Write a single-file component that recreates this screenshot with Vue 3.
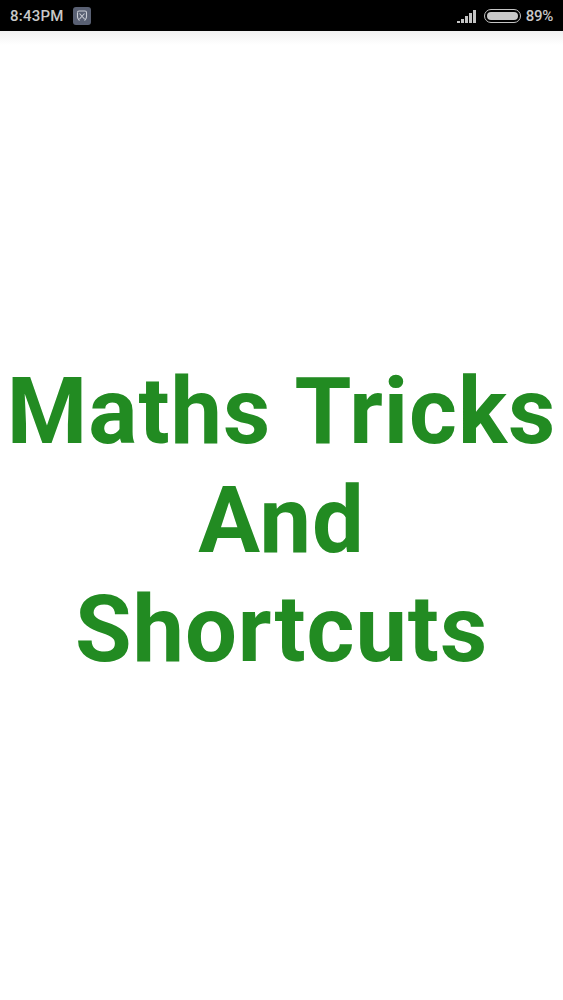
<template>
  <div class="screen">
    <header class="status">
      <div class="left">
        <span class="time">8:43PM</span>
        <span class="notif">
          <svg width="12" height="12" viewBox="0 0 12 12" fill="none" stroke="#c9ccd4" stroke-width="1.1">
            <path d="M1.5 2.5C1.5 1.5 2 1 3 1h6c1 0 1.500.5 1.500 1.500V7c0 1.500-1 2.500-2 3.500" />
            <path d="M1.500 2.500V7c0 1.500 1 2.500 2 3.500" />
            <path d="M3.500 3.500l5 5.500M8.500 3.500l-5 5.500" />
          </svg>
        </span>
      </div>
      <div class="right">
        <svg class="signal" width="20" height="14" viewBox="0 0 20 14" fill="#c4c4c4">
          <rect x="0" y="12" width="3" height="2" />
          <rect x="4" y="10" width="3" height="4" />
          <rect x="8" y="7" width="3" height="7" />
          <rect x="12" y="4" width="3" height="10" />
          <rect x="16" y="1" width="3" height="13" />
        </svg>
        <span class="battery"><span class="level"></span></span>
        <span class="pct">89%</span>
      </div>
    </header>
    <div class="shade"></div>
    <main class="splash">
      <h1 class="title">Maths Tricks<br />And<br />Shortcuts</h1>
    </main>
  </div>
</template>

<script setup>
</script>

<style>
html, body { margin: 0; background: #fff; }
</style>

<style scoped>
.screen {
  width: 563px;
  height: 1000px;
  display: flex;
  flex-direction: column;
  background: #fff;
  overflow: hidden;
}
.status {
  height: 31px;
  flex: none;
  background: #000;
  display: flex;
  align-items: center;
  justify-content: space-between;
  padding: 0 10px;
  box-sizing: border-box;
  font-family: Roboto, sans-serif;
  font-weight: 500;
  font-size: 15px;
  color: #c8c8c8;
}
.time { letter-spacing: 0.25px; }
.left, .right {
  display: flex;
  align-items: center;
}
.notif {
  width: 18px;
  height: 18px;
  margin-left: 9px;
  border-radius: 3px;
  background: #596073;
  display: flex;
  align-items: center;
  justify-content: center;
}
.signal { margin-right: 7px; }
.battery {
  width: 37px;
  height: 14px;
  box-sizing: border-box;
  border: 1px solid #c4c4c4;
  border-radius: 7px;
  padding: 2px;
  margin-right: 5px;
  display: flex;
}
.level {
  width: 100%;
  background: #c8c8c8;
  border-radius: 4px;
}
.pct { letter-spacing: -0.3px; }
.shade {
  height: 14px;
  flex: none;
  background: linear-gradient(#f1f1f1, #fff);
}
.splash {
  flex: 1;
  display: flex;
  flex-direction: column;
  align-items: center;
  padding-top: 312px;
}
.title {
  margin: 0;
  font-family: Roboto, sans-serif;
  font-weight: 700;
  font-size: 92px;
  line-height: 109px;
  letter-spacing: 0.9px;
  word-spacing: 2px;
  text-align: center;
  white-space: nowrap;
  color: #228b22;
}
</style>
